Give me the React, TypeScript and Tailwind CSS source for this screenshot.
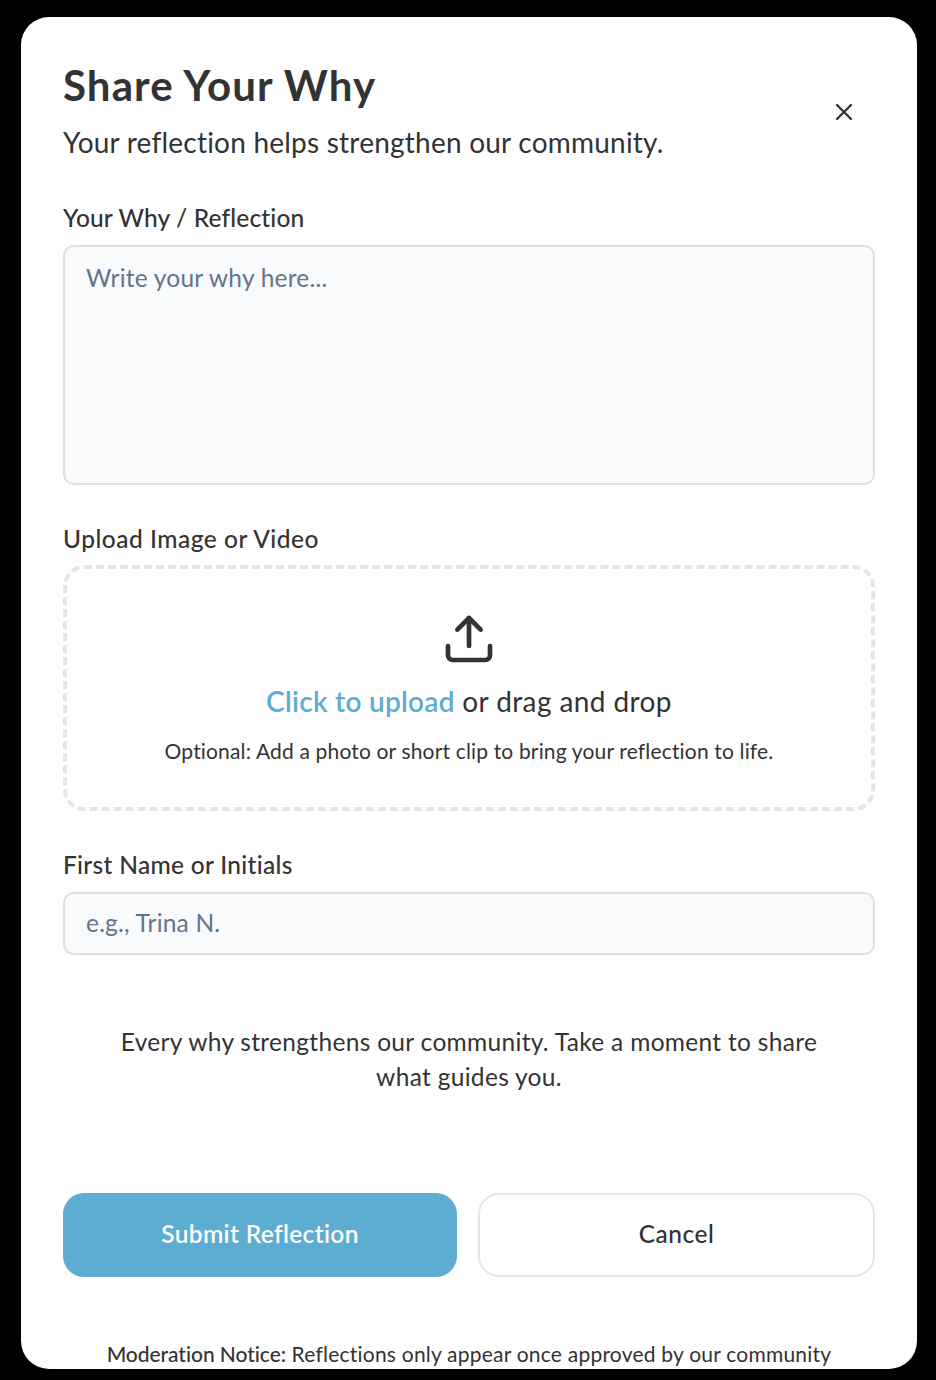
import type { ReactNode } from "react";

function FieldLabel({ htmlFor, className, children }: { htmlFor: string; className: string; children: ReactNode }) {
  return (
    <label htmlFor={htmlFor} className={`block h-[25px] text-[24.5px] leading-[27px] font-medium whitespace-nowrap ${className}`}>
      {children}
    </label>
  );
}

function CloseIcon() {
  return (
    <svg width="28" height="28" viewBox="0 0 24 24" fill="none" stroke="currentColor" strokeWidth="2" strokeLinecap="round" strokeLinejoin="round">
      <path d="M18 6 6 18" />
      <path d="m6 6 12 12" />
    </svg>
  );
}

function UploadIcon() {
  return (
    <svg width="56" height="56" viewBox="0 0 24 24" fill="none" stroke="currentColor" strokeWidth="2" strokeLinecap="round" strokeLinejoin="round">
      <path d="M21 15v4a2 2 0 0 1-2 2H5a2 2 0 0 1-2-2v-4" />
      <path d="m17 8-5-5-5 5" />
      <path d="M12 3v12" />
    </svg>
  );
}

export default function App() {
  return (
    <div className="h-[1380px] w-[936px] overflow-hidden bg-black pt-[17px] pl-[21px] font-[Lato,sans-serif] text-[#333333]">
      <main className="h-[1352px] w-[896px] overflow-hidden rounded-[28px] bg-white px-[42px] pt-[42px]">
        <header className="flex h-[103px] items-start justify-between">
          <div>
            <h1 className="h-[49px] text-[42px] leading-[53px] font-bold tracking-[1.1px] whitespace-nowrap">Share Your Why</h1>
            <p className="mt-[13px] text-[28px] leading-[42px] tracking-[0.22px] whitespace-nowrap">
              Your reflection helps strengthen our community.
            </p>
          </div>
          <button aria-label="Close" className="mt-[39px] mr-[17px]">
            <CloseIcon />
          </button>
        </header>

        <form className="mt-[42px]">
          <FieldLabel htmlFor="why" className="tracking-[0.15px]">Your Why / Reflection</FieldLabel>
          <textarea
            id="why"
            placeholder="Write your why here..."
            className="mt-4 block h-[240px] w-full resize-none rounded-[10.5px] border-2 border-[#dee0e2] bg-[#f8fafc] px-[21px] py-[13px] text-[24.5px] leading-[35px] tracking-[0.22px] outline-none placeholder:text-[#64748b]"
          />

          <div className="mt-10">
            <FieldLabel htmlFor="media" className="tracking-[0.5px]">Upload Image or Video</FieldLabel>
          </div>
          <div id="media" className="mt-[15px] flex h-[246px] flex-col items-center rounded-[21px] border-4 border-dashed border-[#e5e5e5] pt-[42px]">
            <UploadIcon />
            <p className="mt-[13px] text-[28px] leading-[42px] tracking-[0.4px] whitespace-nowrap">
              <span className="font-semibold tracking-[0.27px] text-[#5dacd1]">Click to upload</span> or drag and drop
            </p>
            <p className="mt-[14px] text-[21px] leading-[30px] tracking-[0.16px] whitespace-nowrap">
              Optional: Add a photo or short clip to bring your reflection to life.
            </p>
          </div>

          <div className="mt-10">
            <FieldLabel htmlFor="name" className="tracking-[0.3px]">First Name or Initials</FieldLabel>
          </div>
          <input
            id="name"
            type="text"
            placeholder="e.g., Trina N."
            className="mt-4 block h-[63px] w-full rounded-[10.5px] border-2 border-[#dee0e2] bg-[#f8fafc] px-[21px] pb-[3px] text-[24.5px] tracking-[0.2px] outline-none placeholder:text-[#64748b]"
          />

          <p className="mt-[69px] text-center text-[24.5px] leading-[35px] tracking-[0.31px] whitespace-nowrap">
            Every why strengthens our community. Take a moment to share
            <br />
            what guides you.
          </p>

          <div className="mt-[99px] flex gap-[21px]">
            <button type="button" className="h-[84px] w-[394px] rounded-[21px] bg-[#5dacd1] pb-[1px] text-[24.5px] font-semibold tracking-[0.33px] text-white">
              Submit Reflection
            </button>
            <button type="button" className="h-[84px] w-[397px] rounded-[21px] border-2 border-[#e5e5e5] bg-white pb-[1px] text-[24.5px] font-medium tracking-[0.5px]">
              Cancel
            </button>
          </div>

          <p className="mt-[62px] text-center text-[21px] leading-[30px] tracking-[0.22px] whitespace-nowrap">
            <span className="font-medium tracking-[-0.05px]">Moderation Notice:</span> Reflections only appear once approved by our community
          </p>
        </form>
      </main>
    </div>
  );
}
